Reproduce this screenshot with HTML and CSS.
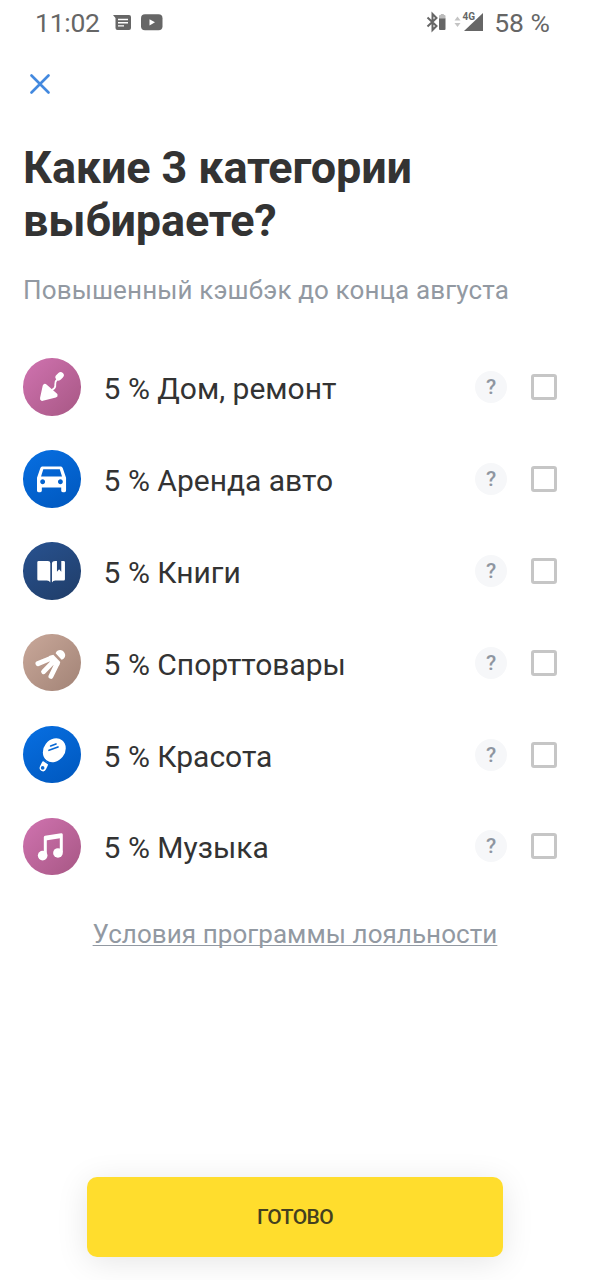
FILE: index.html
```html
<!DOCTYPE html>
<html lang="ru">
<head>
<meta charset="utf-8">
<title>Категории кэшбэка</title>
<link rel="stylesheet" href="styles.css">
</head>
<body>
<div class="screen">
  <header class="status">
    <span class="time">11:02</span>
    <svg class="msg" width="18" height="16" viewBox="0 0 18 16"><path fill="#666" d="M0 0h16q2 0 2 2v11q0 2-2 2H4.500q-2 0-2-2V3z"/><path stroke="#fff" stroke-width="1.400" d="M5 4.500h10M5 7.700h10M5 10.900h6"/></svg>
    <svg class="tube" width="22" height="17" viewBox="0 0 22 17"><rect width="21.500" height="16" y=".3" rx="4" fill="#666"/><path fill="#fff" d="M8.500 5.200v6.200l5.500-3.100z"/></svg>
    <span class="spacer"></span>
    <svg class="signals" width="60" height="24" viewBox="0 0 60 24">
      <path fill="none" stroke="#666" stroke-width="2" d="M1.500 7.500l9 8.500-4 4V4l4 4-9 8.500"/>
      <path fill="#bbb" d="M13 6q0-1 1-1h.8V4h3v1h.7q1 0 1 1v3H13z"/><path fill="#666" d="M13 8.500h6.500V19q0 1-1 1H14q-1 0-1-1z"/>
      <path fill="#c4c4c4" d="M28.500 10.500l3-4 3 4zM28.500 13l3 4 3-4z"/>
      <path fill="#666" d="M57 3v18H38z"/><text x="36.500" y="9.500" class="net">4G</text>
    </svg>
    <span class="battery">58 %</span>
  </header>
  <button class="close" aria-label="Закрыть"><svg width="20" height="20" viewBox="0 0 20 20"><path d="M1.500 1.500l17 17M18.500 1.500l-17 17" stroke="#4389df" stroke-width="2.600" stroke-linecap="round"/></svg></button>
  <h1 class="title">Какие 3 категории<br>выбираете?</h1>
  <p class="subtitle">Повышенный кэшбэк до конца августа</p>

  <ul class="list">
    <li class="row">
      <svg class="icon pink" viewBox="0 0 173 173"><path d="M66 85L58 122L97 112Z" fill="#fff" stroke="#fff" stroke-width="14" stroke-linejoin="round"/><path d="M84 98L94 91Q98 87 97 78Q96 70 104 63" fill="none" stroke="#fff" stroke-width="5.500"/><path d="M107 58l6-6" stroke="#fff" stroke-width="19" stroke-linecap="round"/></svg>
      <span class="name">5 % Дом, ремонт</span><span class="help">?</span><span class="box"></span>
    </li>
    <li class="row">
      <svg class="icon blue" viewBox="0 0 173 173"><path transform="translate(27.500 25) scale(4.850)" fill="#fff" d="M18.920 6.010C18.720 5.420 18.160 5 17.500 5h-11c-.66 0-1.210.42-1.420 1.010L3 12v8c0 .55.450 1 1 1h1c.55 0 1-.45 1-1v-2h12v2c0 .55.450 1 1 1h1c.55 0 1-.45 1-1v-8zM6.500 16c-.83 0-1.500-.67-1.500-1.500S5.670 13 6.500 13s1.500.67 1.500 1.500S7.330 16 6.500 16zm11 0c-.83 0-1.500-.67-1.500-1.500s.67-1.500 1.500-1.500 1.500.67 1.500 1.500-.67 1.500-1.500 1.500zM5.500 11.200l1.400-4.500h10.200l1.400 4.500z"/></svg>
      <span class="name">5 % Аренда авто</span><span class="help">?</span><span class="box"></span>
    </li>
    <li class="row">
      <svg class="icon navy" viewBox="0 0 173 173"><path fill="#fff" d="M47 57H75Q82 57 82 64V122Q79 116 72 116H47Q43 116 43 112V61Q43 57 47 57ZM97 57H102V89L108.500 82L115 89V57H122Q126 57 126 61V112Q126 116 122 116H97Q90 116 87 122V64Q88 57 97 57Z"/></svg>
      <span class="name">5 % Книги</span><span class="help">?</span><span class="box"></span>
    </li>
    <li class="row">
      <svg class="icon tan" viewBox="0 0 173 173"><path d="M45 89L84 73M62 113L91 83M84 127L102 90" stroke="#fff" stroke-width="15" stroke-linecap="round"/><path fill="#fff" d="M78 66L91 62L112 84L108 95L92 94L80 82Z"/><path fill="#fff" d="M98 58C102 46 117 45 123 54C130 63 127 74 116 77Z"/></svg>
      <span class="name">5 % Спорттовары</span><span class="help">?</span><span class="box"></span>
    </li>
    <li class="row">
      <svg class="icon blue" viewBox="0 0 173 173"><ellipse cx="94" cy="73" rx="32" ry="38" transform="rotate(38 94 73)" fill="#fff"/><path d="M83 60L99 54M78 73L105 63" stroke="#0868d4" stroke-width="5" stroke-linecap="round"/><path d="M65 115L60 126" stroke="#fff" stroke-width="20" stroke-linecap="round"/><circle cx="59" cy="126" r="5.500" fill="#0868d4"/><path d="M58 101L79 115" stroke="#0868d4" stroke-width="5"/></svg>
      <span class="name">5 % Красота</span><span class="help">?</span><span class="box"></span>
    </li>
    <li class="row">
      <svg class="icon pink" viewBox="0 0 173 173"><path d="M67 111V58L115 50V104" fill="none" stroke="#fff" stroke-width="9" stroke-linejoin="round"/><path d="M67 62L115 54" stroke="#fff" stroke-width="12"/><circle cx="59" cy="113" r="14.500" fill="#fff"/><circle cx="105" cy="105" r="14.500" fill="#fff"/></svg>
      <span class="name">5 % Музыка</span><span class="help">?</span><span class="box"></span>
    </li>
  </ul>
  <a class="terms">Условия программы лояльности</a>
  <button class="done">ГОТОВО</button>
</div>
</body>
</html>
```

FILE: styles.css
```css
* { box-sizing: border-box; }
body { margin: 0; background: #fff; font-family: Roboto, "Noto Sans", sans-serif; color: #333; }
button { border: 0; padding: 0; background: none; font: inherit; display: block; }
.screen { width: 590px; height: 1280px; display: flex; flex-direction: column; overflow: hidden; }
.status { height: 46px; padding: 0 40px 0 35px; display: flex; align-items: center; flex: none; font-size: 26.500px; color: #666; }
.time { width: 78px; margin-top: -2px; letter-spacing: -.25px; }
.battery { margin-top: -2px; }
.msg { margin-right: 10px; margin-top: 0; }
.tube { margin-top: -2px; }
.spacer { flex: 1; }
.signals { width: 60px; margin-right: 8px; margin-top: -2px; }
.net { font-size: 10px; font-weight: 700; fill: #666; stroke: #fff; stroke-width: 1.500px; paint-order: stroke; }
.close { width: 20px; height: 20px; margin: 28px 0 0 30px; flex: none; }
.close svg { display: block; }
.title { margin: 48px 0 0 23px; font-size: 45px; line-height: 52.500px; font-weight: 700; letter-spacing: -.15px; white-space: nowrap; }
.subtitle { margin: 27px 0 0 23px; font-size: 26px; line-height: 32px; letter-spacing: .13px; color: #9299a2; white-space: nowrap; }
.list { list-style: none; margin: 35px 0 0; padding: 0; }
.row { height: 91.900px; padding: 0 33px 0 23px; display: flex; align-items: center; }
.icon { width: 57.600px; height: 57.600px; border-radius: 50%; margin-right: 23px; flex: none; }
.pink { background: linear-gradient(135deg, #d073b0, #a75784); }
.blue { background: linear-gradient(150deg, #076fe2, #0057bd); }
.navy { background: linear-gradient(150deg, #285290, #203d68); }
.tan { background: linear-gradient(135deg, #c9a89a, #a28376); }
.name { flex: 1; font-size: 30px; line-height: 36px; padding-top: 4px; white-space: nowrap; }
.help { width: 32px; height: 32px; border-radius: 50%; background: #f6f7f9; color: #8f96a1; display: grid; place-items: center; font-size: 21px; line-height: 32px; font-weight: 500; margin-right: 24px; }
.box { width: 26px; height: 26px; border: 3px solid #c6c6c6; border-radius: 3px; }
.terms { align-self: center; margin-top: 26px; font-size: 26px; line-height: 32px; letter-spacing: .06px; color: #9299a2; text-decoration: underline; text-decoration-thickness: 1px; text-underline-offset: 2px; text-decoration-skip-ink: none; white-space: nowrap; }
.done { width: 416px; height: 80px; margin: auto auto 23px 87px; flex: none; background: #ffdd2d; border-radius: 10px; box-shadow: 0 5px 32px rgba(0,0,0,.1); font-size: 21px; font-weight: 500; letter-spacing: -.6px; color: #44401f; }
```
